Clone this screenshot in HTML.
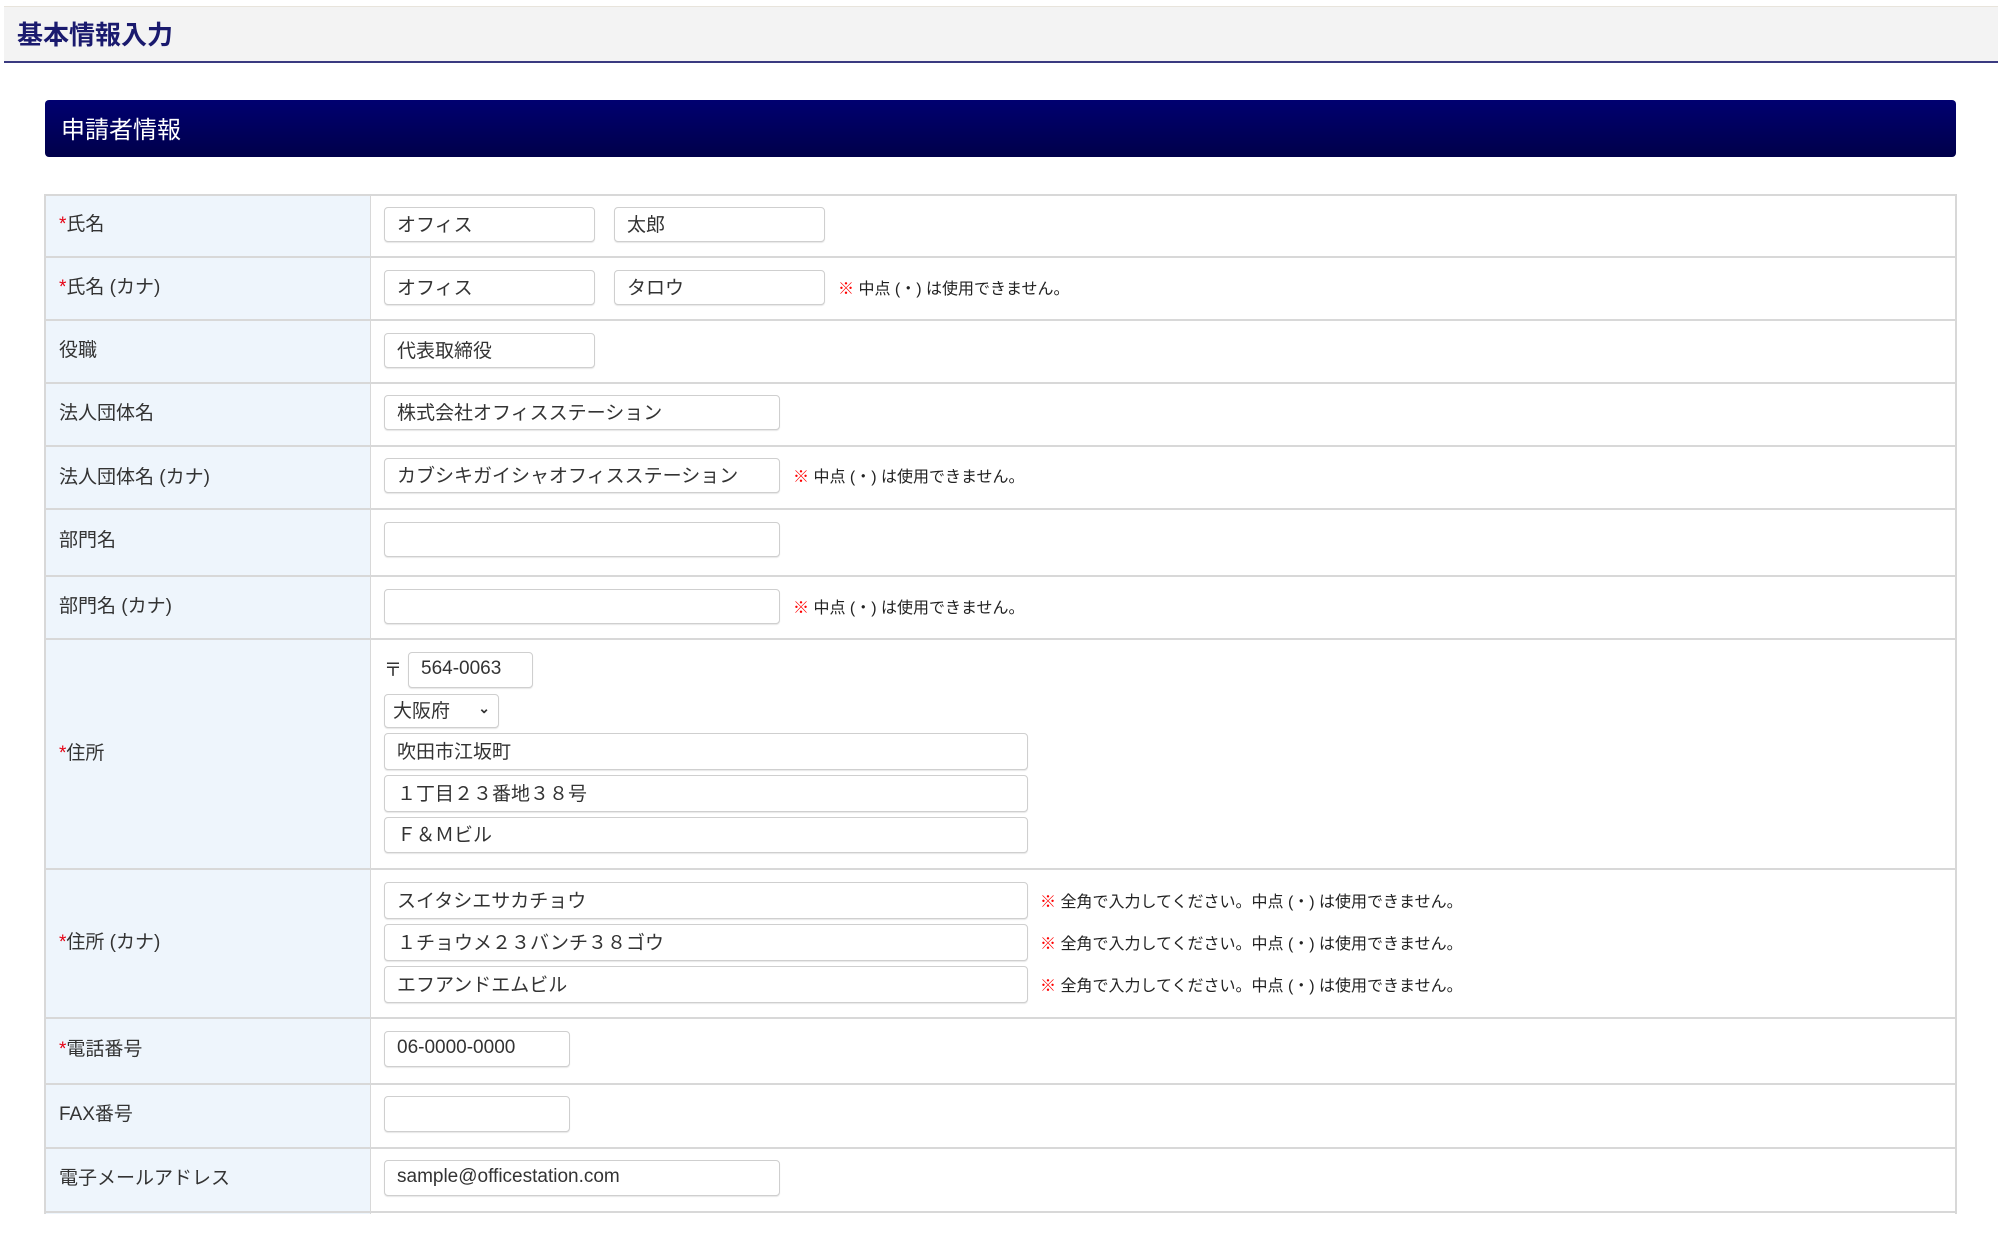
<!DOCTYPE html>
<html><head><meta charset="utf-8"><style>
*{box-sizing:border-box;margin:0;padding:0}
body{width:2002px;height:1234px;background:#fff;position:relative;overflow:hidden;font-family:"Liberation Sans","Noto Sans CJK JP",sans-serif;color:#333}
.a{position:absolute}
.hdr{left:4px;top:6px;width:1994px;height:57px;background:#f3f3f3;border-bottom:2px solid #3a3a80;border-top:1px solid #e8e4dc}
.hdr span{position:absolute;left:13px;top:8px;font-size:26px;font-weight:bold;color:#1a1a6e}
.bar{left:45px;top:100px;width:1911px;height:57px;border-radius:4px;background:linear-gradient(#000070,#00004a)}
.bar span{position:absolute;left:16px;top:10px;font-size:24px;color:#fff}
.lab{left:45px;width:325px;background:#eef5fc}
.row{left:45px;width:1911px;border-top:2px solid #d8d8d8}
.vl{left:370px;top:194px;width:1px;height:1020px;background:#d8d8d8}
.lt{left:59px;font-size:19px;color:#333}
.lt b{color:#e60012;font-weight:normal}
.in{border:1px solid #cfcfcf;border-radius:4px;background:#fff;font-size:19px;padding-left:12px;padding-bottom:3px;display:flex;align-items:center;box-shadow:0 1px 1px #e6e6e6}
.n{font-size:16px;color:#222}
.n b{color:#f00;font-weight:normal}
</style></head><body>
<div class="a hdr"><span>基本情報入力</span></div>
<div class="a bar"><span>申請者情報</span></div>

<div class="a lab" style="top:194px;height:1020px"></div>
<div class="a" style="left:44px;top:194px;width:2px;height:1020px;background:#d8d8d8"></div>
<div class="a" style="left:1955px;top:194px;width:2px;height:1020px;background:#d8d8d8"></div>
<div class="a vl"></div>
<div class="a row" style="top:194px"></div>
<div class="a row" style="top:256px"></div>
<div class="a row" style="top:319px"></div>
<div class="a row" style="top:382px"></div>
<div class="a row" style="top:445px"></div>
<div class="a row" style="top:508px"></div>
<div class="a row" style="top:575px"></div>
<div class="a row" style="top:638px"></div>
<div class="a row" style="top:868px"></div>
<div class="a row" style="top:1017px"></div>
<div class="a row" style="top:1083px"></div>
<div class="a row" style="top:1147px"></div>
<div class="a row" style="top:1211px"></div>

<div class="a lt" style="top:209px"><b>*</b>氏名</div>
<div class="a lt" style="top:272px"><b>*</b>氏名 (カナ)</div>
<div class="a lt" style="top:335px">役職</div>
<div class="a lt" style="top:398px">法人団体名</div>
<div class="a lt" style="top:462px">法人団体名 (カナ)</div>
<div class="a lt" style="top:525px">部門名</div>
<div class="a lt" style="top:591px">部門名 (カナ)</div>
<div class="a lt" style="top:738px"><b>*</b>住所</div>
<div class="a lt" style="top:927px"><b>*</b>住所 (カナ)</div>
<div class="a lt" style="top:1034px"><b>*</b>電話番号</div>
<div class="a lt" style="top:1099px">FAX番号</div>
<div class="a lt" style="top:1163px">電子メールアドレス</div>

<div class="a in" style="left:384px;top:207px;width:211px;height:35px">オフィス</div>
<div class="a in" style="left:614px;top:207px;width:211px;height:35px">太郎</div>
<div class="a in" style="left:384px;top:270px;width:211px;height:35px">オフィス</div>
<div class="a in" style="left:614px;top:270px;width:211px;height:35px">タロウ</div>
<div class="a n" style="left:838px;top:275px"><b>※</b> 中点 (・) は使用できません。</div>
<div class="a in" style="left:384px;top:333px;width:211px;height:35px">代表取締役</div>
<div class="a in" style="left:384px;top:395px;width:396px;height:35px">株式会社オフィスステーション</div>
<div class="a in" style="left:384px;top:458px;width:396px;height:35px">カブシキガイシャオフィスステーション</div>
<div class="a n" style="left:793px;top:463px"><b>※</b> 中点 (・) は使用できません。</div>
<div class="a in" style="left:384px;top:522px;width:396px;height:35px"></div>
<div class="a in" style="left:384px;top:589px;width:396px;height:35px"></div>
<div class="a n" style="left:793px;top:594px"><b>※</b> 中点 (・) は使用できません。</div>

<div class="a" style="left:384px;top:656px;font-size:18px">〒</div>
<div class="a in" style="left:408px;top:652px;width:125px;height:36px">564-0063</div>
<div class="a in" style="left:384px;top:694px;width:115px;height:34px;padding-left:8px">大阪府<span style="position:absolute;right:8px;top:5px;font-size:14px;font-weight:bold">⌄</span></div>
<div class="a in" style="left:384px;top:733px;width:644px;height:37px">吹田市江坂町</div>
<div class="a in" style="left:384px;top:775px;width:644px;height:37px">１丁目２３番地３８号</div>
<div class="a in" style="left:384px;top:817px;width:644px;height:36px">Ｆ＆Ｍビル</div>

<div class="a in" style="left:384px;top:882px;width:644px;height:37px">スイタシエサカチョウ</div>
<div class="a in" style="left:384px;top:924px;width:644px;height:37px">１チョウメ２３バンチ３８ゴウ</div>
<div class="a in" style="left:384px;top:966px;width:644px;height:37px">エフアンドエムビル</div>
<div class="a n" style="left:1040px;top:888px"><b>※</b> 全角で入力してください。中点 (・) は使用できません。</div>
<div class="a n" style="left:1040px;top:930px"><b>※</b> 全角で入力してください。中点 (・) は使用できません。</div>
<div class="a n" style="left:1040px;top:972px"><b>※</b> 全角で入力してください。中点 (・) は使用できません。</div>

<div class="a in" style="left:384px;top:1031px;width:186px;height:36px">06-0000-0000</div>
<div class="a in" style="left:384px;top:1096px;width:186px;height:36px"></div>
<div class="a in" style="left:384px;top:1160px;width:396px;height:36px">sample@officestation.com</div>
</body></html>
